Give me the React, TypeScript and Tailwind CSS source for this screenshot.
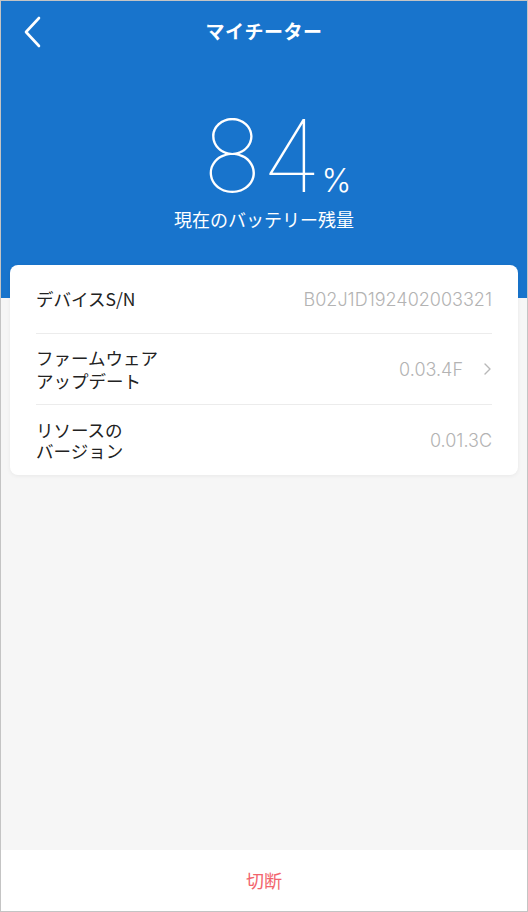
import React from "react";

const jp = { fontFamily: '"Noto Sans CJK JP", "Noto Sans", sans-serif' };
const num = { fontFamily: 'Inter, Roboto, "Noto Sans", sans-serif' };

function Row({ label, value, chevron, last }: { label: React.ReactNode; value: string; chevron?: boolean; last?: boolean }) {
  return (
    <div className={"flex-1 flex items-center justify-between " + (last ? "" : "border-b border-[#ececec]")}>
      {label}
      <div className="flex items-center">
        <span className="text-[18px] font-light text-[#b3b3b3]" style={num}>{value}</span>
        {chevron && (
          <svg width="10" height="14" viewBox="0 0 10 14" className="ml-[20px] mr-[-1px]">
            <path d="M2 2 L7 7 L2 12" fill="none" stroke="#b8b8b8" strokeWidth="1.4" strokeLinecap="round" strokeLinejoin="round" />
          </svg>
        )}
      </div>
    </div>
  );
}

export default function App() {
  return (
    <div className="w-[528px] h-[912px] border border-[#c4c4c4] bg-[#f6f6f6] flex flex-col overflow-hidden">
      <div className="bg-[#1874cc] h-[297px] flex flex-col items-center relative">
        <div className="w-full h-[60px] flex items-center justify-center relative">
          <svg width="20" height="32" viewBox="0 0 20 32" className="absolute left-[21px] top-[15px]">
            <path d="M17 2 L4 16 L17 30" fill="none" stroke="#fff" strokeWidth="2.6" strokeLinecap="round" strokeLinejoin="round" />
          </svg>
          <span className="text-white text-[19px] font-bold tracking-[0.5px]" style={jp}>マイチーター</span>
        </div>
        <div className="flex items-baseline mt-[45px] ml-[26px] text-white" style={num}>
          <span className="text-[100px] leading-[100px] font-thin">84</span>
          <span className="text-[32px] leading-[32px] font-light">%</span>
        </div>
        <div className="text-white text-[18px] leading-[22px] mt-[2px]" style={jp}>現在のバッテリー残量</div>
      </div>
      <div className="mx-[9px] mt-[-33px] bg-white rounded-[8px] shadow-[0_1px_4px_rgba(0,0,0,0.06)] px-[26px] relative" style={jp}>
        <div className="h-[69px] flex flex-col">
          <Row label={<span className="text-[17.5px] text-[#222]">デバイスS/N</span>} value="B02J1D192402003321" />
        </div>
        <div className="h-[71px] flex flex-col">
          <Row
            label={<span className="text-[17.5px] text-[#222] leading-[23px]">ファームウェア<br />アップデート</span>}
            value="0.03.4F"
            chevron
          />
        </div>
        <div className="h-[70px] flex flex-col">
          <Row
            label={<span className="text-[17.5px] text-[#222] leading-[21px]">リソースの<br />バージョン</span>}
            value="0.01.3C"
            last
          />
        </div>
      </div>
      <div className="flex-1" />
      <div className="h-[61px] bg-white flex items-center justify-center">
        <span className="text-[18px] text-[#f2646d]" style={jp}>切断</span>
      </div>
    </div>
  );
}
